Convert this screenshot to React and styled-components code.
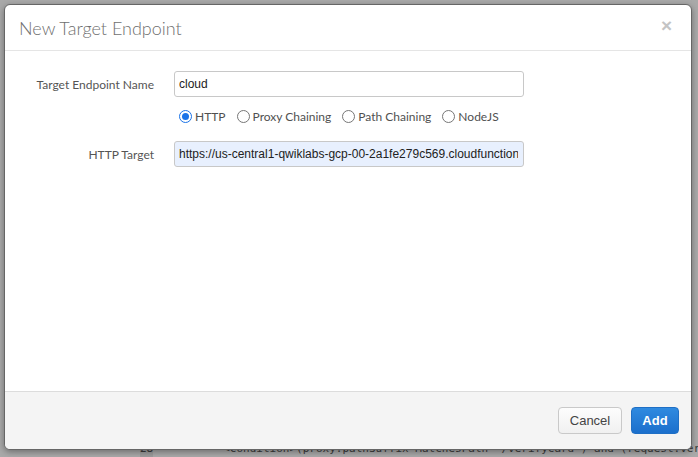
import React from "react";
import styled, { createGlobalStyle } from "styled-components";

const Global = createGlobalStyle`
  html, body {
    margin: 0;
    padding: 0;
    width: 698px;
    height: 457px;
    overflow: hidden;
    background: #a9a9a9;
  }
  * { box-sizing: border-box; }
`;

const Page = styled.div`
  position: relative;
  width: 698px;
  height: 457px;
  display: flex;
  flex-direction: column;
  justify-content: flex-end;
  background: #a9a9a9;
`;

const CodeLine = styled.div`
  height: 14px;
  display: flex;
  align-items: stretch;
  font-family: "DejaVu Sans Mono", monospace;
  font-size: 11px;
  line-height: 12px;
  color: #3a3a3a;

  .gutter {
    width: 50px;
    margin-left: 140px;
    background: #9c9c9c;
    text-align: center;
  }
  .code {
    margin-left: 70px;
    white-space: nowrap;
  }
`;

const Overlay = styled.div`
  position: absolute;
  inset: 0;
  padding: 4px 6px 7px 4px;
  display: flex;
`;

const Dialog = styled.div`
  flex: 1;
  display: flex;
  flex-direction: column;
  background: #fff;
  border: 1px solid #666;
  border-radius: 6px;
  overflow: hidden;
  box-shadow: 0 2px 6px rgba(0, 0, 0, 0.35);
  font-family: Lato, "Liberation Sans", sans-serif;
`;

const Header = styled.div`
  height: 46px;
  flex: none;
  display: flex;
  align-items: center;
  justify-content: space-between;
  padding: 0 19px 0 14px;
  border-bottom: 1px solid #e5e5e5;
`;

const Title = styled.h3`
  margin: 0;
  font-size: 18px;
  font-weight: 300;
  color: #6f6f6f;
`;

const Close = styled.span`
  font-family: "Liberation Sans", sans-serif;
  font-size: 19px;
  font-weight: bold;
  color: #c4c4c4;
  line-height: 1;
  margin-top: -4px;
`;

const Body = styled.div`
  flex: 1;
  padding: 20px 0 0 0;
  display: flex;
  flex-direction: column;
`;

const Row = styled.div`
  display: grid;
  grid-template-columns: 149px 350px;
  column-gap: 20px;
  align-items: center;
  margin-bottom: ${(p) => p.$mb || 0}px;
`;

const Label = styled.label`
  text-align: right;
  font-size: 12px;
  color: #555;
`;

const Input = styled.input`
  height: 26px;
  width: 350px;
  border: 1px solid #c8c8c8;
  border-radius: 3px;
  padding: 0 5px 0 4px;
  font-family: "Liberation Sans", Arial, sans-serif;
  font-size: 12px;
  color: #222;
  background: ${(p) => (p.$filled ? "#e8f0fe" : "#fff")};
  outline: none;
`;

const Radios = styled.div`
  grid-column: 2;
  height: 16px;
  display: flex;
  align-items: center;
  gap: 11px;
  padding-left: 5px;
`;

const RadioItem = styled.label`
  display: flex;
  align-items: center;
  gap: 3px;
  font-size: 12px;
  color: #505050;
`;

const Circle = styled.span`
  width: 13px;
  height: 13px;
  border-radius: 50%;
  border: 1px solid ${(p) => (p.$on ? "#1a73e8" : "#767676")};
  display: flex;
  align-items: center;
  justify-content: center;
  background: #fff;

  &::after {
    content: "";
    width: 7px;
    height: 7px;
    border-radius: 50%;
    background: ${(p) => (p.$on ? "#1a73e8" : "transparent")};
  }
`;

const Footer = styled.div`
  height: 58px;
  flex: none;
  background: #f4f4f4;
  border-top: 1px solid #dcdcdc;
  display: flex;
  align-items: center;
  justify-content: flex-end;
  gap: 9px;
  padding: 0 12px 0 0;
`;

const Button = styled.button`
  height: 27px;
  width: ${(p) => (p.$primary ? 48 : 64)}px;
  padding: 0;
  border-radius: 4px;
  font-family: "Liberation Sans", Arial, sans-serif;
  font-size: 13px;
  font-weight: ${(p) => (p.$primary ? 700 : 400)};
  color: ${(p) => (p.$primary ? "#fff" : "#444")};
  border: 1px solid ${(p) => (p.$primary ? "#1f6fc5" : "#c9c9c9")};
  background: ${(p) =>
    p.$primary
      ? "linear-gradient(#2f8ae0, #1b6fcc)"
      : "linear-gradient(#fdfdfd, #f0f0f0)"};
`;

const options = ["HTTP", "Proxy Chaining", "Path Chaining", "NodeJS"];

export default function App() {
  return (
    <Page>
      <Global />
      <CodeLine>
        <span className="gutter">28</span>
        <span className="code">
          &lt;Condition&gt;(proxy.pathSuffix MatchesPath "/verifycard") and (request.verb
        </span>
      </CodeLine>
      <Overlay>
        <Dialog>
          <Header>
            <Title>New Target Endpoint</Title>
            <Close>×</Close>
          </Header>
          <Body>
            <Row $mb={11}>
              <Label>Target Endpoint Name</Label>
              <Input defaultValue="cloud" />
            </Row>
            <Row $mb={17}>
              <Radios>
                {options.map((o, i) => (
                  <RadioItem key={o}>
                    <Circle $on={i === 0} />
                    {o}
                  </RadioItem>
                ))}
              </Radios>
            </Row>
            <Row>
              <Label>HTTP Target</Label>
              <Input
                $filled
                defaultValue="https://us-central1-qwiklabs-gcp-00-2a1fe279c569.cloudfunctions.net/verify"
              />
            </Row>
          </Body>
          <Footer>
            <Button>Cancel</Button>
            <Button $primary>Add</Button>
          </Footer>
        </Dialog>
      </Overlay>
    </Page>
  );
}
